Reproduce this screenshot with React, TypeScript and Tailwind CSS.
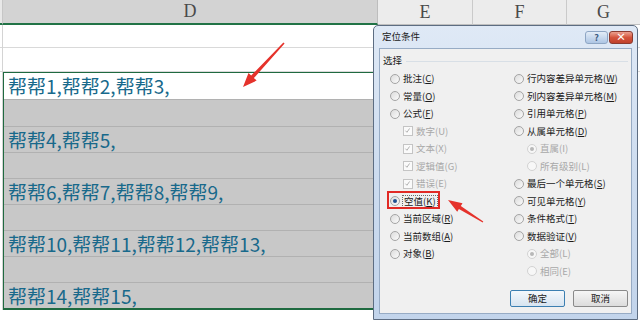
import React from "react";

type Opt = {
  text: string;
  k: string;
  kind: "radio" | "check";
  indent?: boolean;
  disabled?: boolean;
  checked?: boolean;
  highlight?: boolean;
};

const leftCol: Opt[] = [
  { text: "批注", k: "C", kind: "radio" },
  { text: "常量", k: "O", kind: "radio" },
  { text: "公式", k: "F", kind: "radio" },
  { text: "数字", k: "U", kind: "check", indent: true, disabled: true, checked: true },
  { text: "文本", k: "X", kind: "check", indent: true, disabled: true, checked: true },
  { text: "逻辑值", k: "G", kind: "check", indent: true, disabled: true, checked: true },
  { text: "错误", k: "E", kind: "check", indent: true, disabled: true, checked: true },
  { text: "空值", k: "K", kind: "radio", checked: true, highlight: true },
  { text: "当前区域", k: "R", kind: "radio" },
  { text: "当前数组", k: "A", kind: "radio" },
  { text: "对象", k: "B", kind: "radio" },
];

const rightCol: Opt[] = [
  { text: "行内容差异单元格", k: "W", kind: "radio" },
  { text: "列内容差异单元格", k: "M", kind: "radio" },
  { text: "引用单元格", k: "P", kind: "radio" },
  { text: "从属单元格", k: "D", kind: "radio" },
  { text: "直属", k: "I", kind: "radio", indent: true, disabled: true, checked: true },
  { text: "所有级别", k: "L", kind: "radio", indent: true, disabled: true },
  { text: "最后一个单元格", k: "S", kind: "radio" },
  { text: "可见单元格", k: "Y", kind: "radio" },
  { text: "条件格式", k: "T", kind: "radio" },
  { text: "数据验证", k: "V", kind: "radio" },
  { text: "全部", k: "L", kind: "radio", indent: true, disabled: true, checked: true },
  { text: "相同", k: "E", kind: "radio", indent: true, disabled: true },
];

function Radio({ checked, disabled }: { checked?: boolean; disabled?: boolean }) {
  if (disabled) {
    return (
      <span className="relative inline-block w-[10px] h-[10px] shrink-0 rounded-full border border-[#d2d2d2] bg-[#f7f7f7]">
        {checked && <span className="absolute left-[2px] top-[2px] w-[4px] h-[4px] rounded-full bg-[#b8b8b8]" />}
      </span>
    );
  }
  return (
    <span className="relative inline-block w-[10px] h-[10px] shrink-0 rounded-full border border-[#a4a4a4] bg-gradient-to-br from-[#dcdcdc] to-[#fbfbfb]">
      {checked && <span className="absolute left-[2px] top-[2px] w-[4px] h-[4px] rounded-full bg-[#1f4f8f]" />}
    </span>
  );
}

function Check() {
  return (
    <span className="relative inline-block w-[10px] h-[10px] shrink-0 border border-[#c4c4c4] bg-[#fafafa]">
      <svg viewBox="0 0 10 10" className="absolute left-0 top-0 w-[8px] h-[8px]">
        <path d="M1.8 4.6 L3.7 6.6 L7 1.8" fill="none" stroke="#a9a9a9" strokeWidth="1.1" />
      </svg>
    </span>
  );
}

function OptRow({ o }: { o: Opt }) {
  const color = o.disabled ? "text-[#a8a8a8]" : "text-[#1b1b1b]";
  return (
    <div className="h-[17.5px] flex items-center">
      <div className={o.indent ? "relative flex items-center ml-[13px]" : "relative flex items-center"}>
        {o.kind === "radio" ? <Radio checked={o.checked} disabled={o.disabled} /> : <Check />}
        <span
          className={
            o.highlight
              ? `ml-[2px] px-[1px] border border-dotted border-[#6a6a6a] leading-[11px] ${color}`
              : `ml-[3px] leading-[11px] ${color}`
          }
        >
          {o.text}(
          {o.disabled ? o.k : <span className="underline underline-offset-[1px]">{o.k}</span>})
        </span>
        {o.highlight && (
          <div className="absolute left-[-3px] top-[-4px] w-[53px] h-[18px] border-2 border-[#e12a25]" />
        )}
      </div>
    </div>
  );
}

const dataRows: { text: string; h: string; white?: boolean }[] = [
  { text: "帮帮1,帮帮2,帮帮3,", h: "h-[27px]", white: true },
  { text: "", h: "h-[27px]" },
  { text: "帮帮4,帮帮5,", h: "h-[27px]" },
  { text: "", h: "h-[26px]" },
  { text: "帮帮6,帮帮7,帮帮8,帮帮9,", h: "h-[26px]" },
  { text: "", h: "h-[26px]" },
  { text: "帮帮10,帮帮11,帮帮12,帮帮13,", h: "h-[27px]" },
  { text: "", h: "h-[26px]" },
  { text: "帮帮14,帮帮15,", h: "h-[25px]" },
];

export default function App() {
  return (
    <div className="relative w-[640px] h-[323px] overflow-hidden bg-white font-['Noto_Sans_CJK_SC',sans-serif]">
      {/* header */}
      <div className="flex h-[25px]">
        <div className="w-[3px] bg-[#e8e8e8] border-r border-[#c6c6c6] border-b-2 border-b-[#217346]" />
        <div className="w-[375px] bg-[#d3d3d3] border-r border-[#bdbdbd] border-b-2 border-b-[#217346] flex items-center justify-center font-['Liberation_Serif',serif] text-[18px] text-[#4a4a4a]">
          D
        </div>
        <div className="w-[95px] bg-[#ececec] border-r border-[#cacaca] border-b border-b-[#bfbfbf] flex items-center justify-center font-['Liberation_Serif',serif] text-[18px] text-[#4a4a4a]">
          E
        </div>
        <div className="w-[94px] bg-[#ececec] border-r border-[#cacaca] border-b border-b-[#bfbfbf] flex items-center justify-center font-['Liberation_Serif',serif] text-[18px] text-[#4a4a4a]">
          F
        </div>
        <div className="flex-1 bg-[#ececec] border-b border-b-[#bfbfbf] flex items-center justify-center font-['Liberation_Serif',serif] text-[18px] text-[#4a4a4a]">
          G
        </div>
      </div>

      {/* body */}
      <div className="flex">
        <div className="w-[3px] flex flex-col border-r border-[#d4d4d4]">
          <div className="h-[23px] border-b border-[#d9d9d9]" />
          <div className="h-[24px] border-b border-[#d9d9d9]" />
          <div className="h-[238px]" />
        </div>
        <div className="w-[375px] flex flex-col">
          <div className="h-[23px] border-b border-[#d9d9d9]" />
          <div className="h-[24px] border-b border-[#d9d9d9]" />
          <div className="h-[238px] border border-[#1f6a40] border-b-2 flex flex-col">
            {dataRows.map((r, i) => (
              <div
                key={i}
                className={`${r.h} flex items-center pl-[4px] text-[19px] leading-none text-[#18698b] ${
                  r.white ? "bg-white" : "bg-[#c8c8c8]"
                } ${i < dataRows.length - 1 ? "border-b border-[#b1b1b1]" : ""}`}
              >
                {r.text}
              </div>
            ))}
          </div>
          <div className="flex-1" />
        </div>
        <div className="flex-1 flex flex-col">
          <div className="h-[23px] border-b border-[#d9d9d9]" />
          <div className="h-[24px] border-b border-[#d9d9d9]" />
        </div>
      </div>

      {/* arrows */}
      <svg className="absolute left-0 top-0 w-[640px] h-[323px] pointer-events-none" viewBox="0 0 640 323">
        <polygon
          points="284.6,43.4 253.9,78 256.6,80.6 243,87 248.5,72.9 251.2,75.5 283.4,42.6"
          fill="#e5322b"
        />
      </svg>

      {/* dialog */}
      <div className="absolute left-[373px] top-[25px] w-[265px] h-[295px] rounded-t-[5px] border border-[#5d6d82] bg-gradient-to-b from-[#dfe9f6] via-[#cddcef] to-[#c2d4eb] flex flex-col">
        <div className="h-[22px] flex items-center justify-between pl-[8px] pr-[4px]">
          <span className="text-[9.5px] text-[#1a1a1a] leading-none">定位条件</span>
          <div className="flex items-center gap-[1px]">
            <div className="w-[23px] h-[13px] rounded-[3px] border border-[#8ea6c4] bg-gradient-to-b from-[#e3ecf7] to-[#aec6e4] flex items-center justify-center text-[9px] font-bold text-[#3d5a80] leading-none">
              ?
            </div>
            <div className="w-[24px] h-[13px] rounded-[3px] border border-[#8b3b30] bg-gradient-to-b from-[#eba08f] via-[#d4543d] to-[#c0412b] flex items-center justify-center text-[10px] font-bold text-white leading-none">
              ×
            </div>
          </div>
        </div>
        <div className="flex-1 mx-[5px] mb-[5px] bg-[#f0f0f0] border border-[#97abc4] flex flex-col text-[9.5px]">
          <div className="mt-[5px] h-[14px] flex items-center pl-[3px]">
            <span className="text-[#1a1a1a] leading-none">选择</span>
            <div className="flex-1 ml-[4px] mr-[3px] h-px bg-[#d8dfe6]" />
          </div>
          <div className="mt-[2px] flex pl-[10px]">
            <div className="w-[124px] flex flex-col">
              {leftCol.map((o, i) => (
                <OptRow key={i} o={o} />
              ))}
            </div>
            <div className="flex-1 flex flex-col">
              {rightCol.map((o, i) => (
                <OptRow key={i} o={o} />
              ))}
            </div>
          </div>
          <div className="mt-[10px] flex justify-end gap-[8px] pr-[3px]">
            <div className="w-[55px] h-[17px] rounded-[2px] border border-[#3c7fb1] bg-gradient-to-b from-[#f4f8fc] to-[#d7e4f0] flex items-center justify-center text-[#1a1a1a] leading-none">
              确定
            </div>
            <div className="w-[55px] h-[17px] rounded-[2px] border border-[#8a8a8a] bg-gradient-to-b from-[#f6f6f6] to-[#dcdcdc] flex items-center justify-center text-[#1a1a1a] leading-none">
              取消
            </div>
          </div>
        </div>
      </div>

      <svg className="absolute left-0 top-0 w-[640px] h-[323px] pointer-events-none" viewBox="0 0 640 323">
        <polygon
          points="483.3,221.6 460.8,205.9 462.5,203.2 448,200 457.2,211.7 458.9,209 482.7,222.4"
          fill="#e5322b"
        />
      </svg>
    </div>
  );
}
